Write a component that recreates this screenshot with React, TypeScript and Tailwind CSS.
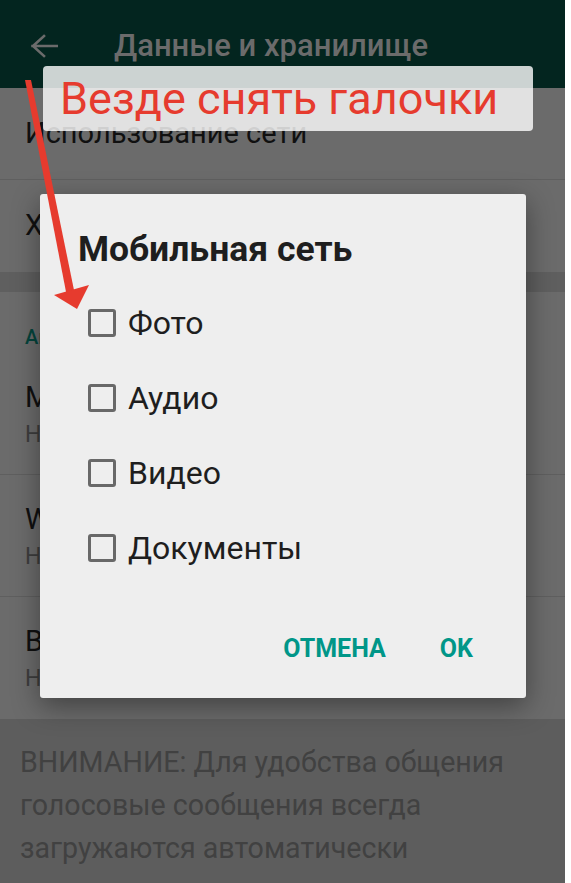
const rows = [
  { title: 'Мобильная сеть', sub: 'Нет медиа' },
  { title: 'Wi-Fi', sub: 'Нет медиа' },
  { title: 'В роуминге', sub: 'Нет медиа' },
]

const options = ['Фото', 'Аудио', 'Видео', 'Документы']

function BackArrow() {
  return (
    <svg width="28" height="24" viewBox="0 0 28 24" fill="none" aria-hidden="true">
      <path d="M2.5 12H27M14 2L3 12l11 10" stroke="#6b6b6b" strokeWidth="2.6" strokeLinecap="square" />
    </svg>
  )
}

function Checkbox() {
  return <span className="block size-[28px] shrink-0 rounded-[3px] border-[3px] border-[#686868]" />
}

export default function App() {
  return (
    <div className="relative h-[883px] w-[565px] overflow-hidden bg-[#6b6b6b] font-['Roboto','Noto_Sans',sans-serif]">
      {/* dimmed settings screen */}
      <header className="flex h-[88px] items-center bg-[#03251f] pl-[30px] pt-[4px]">
        <BackArrow />
        <h1 className="ml-[56px] text-[31px] font-medium text-[#6b6b6b]">Данные и хранилище</h1>
      </header>

      <div className="flex h-[92px] items-center border-b border-[#5f5f5f] pl-[25px] text-[29px] text-[#101010]">
        Использование сети
      </div>
      <div className="flex h-[92px] items-center pl-[25px] text-[29px] text-[#101010]">Хранилище</div>
      <div className="h-[20px] bg-[#5f5f5f]" />

      <div className="h-[61px] pl-[25px] pt-[33px] text-[20px] font-medium leading-[24px] text-[#04443c]">
        Автозагрузка медиа
      </div>
      {rows.map((row, i) => (
        <div
          key={row.title}
          className={`h-[122px] pl-[25px] pt-[25px] ${i < rows.length - 1 ? 'border-b border-[#5f5f5f]' : ''}`}
        >
          <div className="text-[29px] leading-[38px] text-[#101010]">{row.title}</div>
          <div className="text-[23px] leading-[38px] text-[#3d3d3d]">{row.sub}</div>
        </div>
      ))}

      <div className="h-[167px] bg-[#5d5d5d] pl-[20px] pt-[22px] text-[28.6px] leading-[43px] text-[#414141]">
        ВНИМАНИЕ: Для удобства общения
        <br />
        голосовые сообщения всегда
        <br />
        загружаются автоматически
      </div>

      {/* dialog */}
      <div className="absolute left-[40px] top-[194px] flex h-[504px] w-[486px] flex-col rounded-[3px] bg-[#eeeeee] shadow-[0_8px_28px_rgba(0,0,0,0.4)]">
        <h2 className="pl-[38px] pt-[35px] text-[35.5px] font-bold leading-[40px] text-[#1e1e1e]">Мобильная сеть</h2>
        <div className="mt-[16px]">
          {options.map((opt) => (
            <div key={opt} className="flex h-[75px] items-center gap-[12px] pl-[48px]">
              <Checkbox />
              <span className="text-[32px] leading-[40px] text-[#1e1e1e]">{opt}</span>
            </div>
          ))}
        </div>
        <div className="mb-[25px] mt-auto flex h-[48px] items-center justify-end gap-[54px] pr-[53px] text-[25px] font-bold text-[#009688]">
          <button>ОТМЕНА</button>
          <button>OK</button>
        </div>
      </div>

      {/* annotation */}
      <div className="absolute left-[43px] top-[66px] flex h-[65px] w-[490px] items-center rounded-[4px] bg-[rgba(255,255,255,0.8)] pl-[17px] text-[45px] leading-none text-[#e63b2e]">
        Везде снять галочки
      </div>
      <svg className="absolute left-0 top-0" width="120" height="320" viewBox="0 0 120 320" aria-hidden="true">
        <polygon points="25,80 31,80 75,295 67,297" fill="#e63b2e" />
        <polygon points="77,309 54,295 89,285" fill="#e63b2e" />
      </svg>
    </div>
  )
}
